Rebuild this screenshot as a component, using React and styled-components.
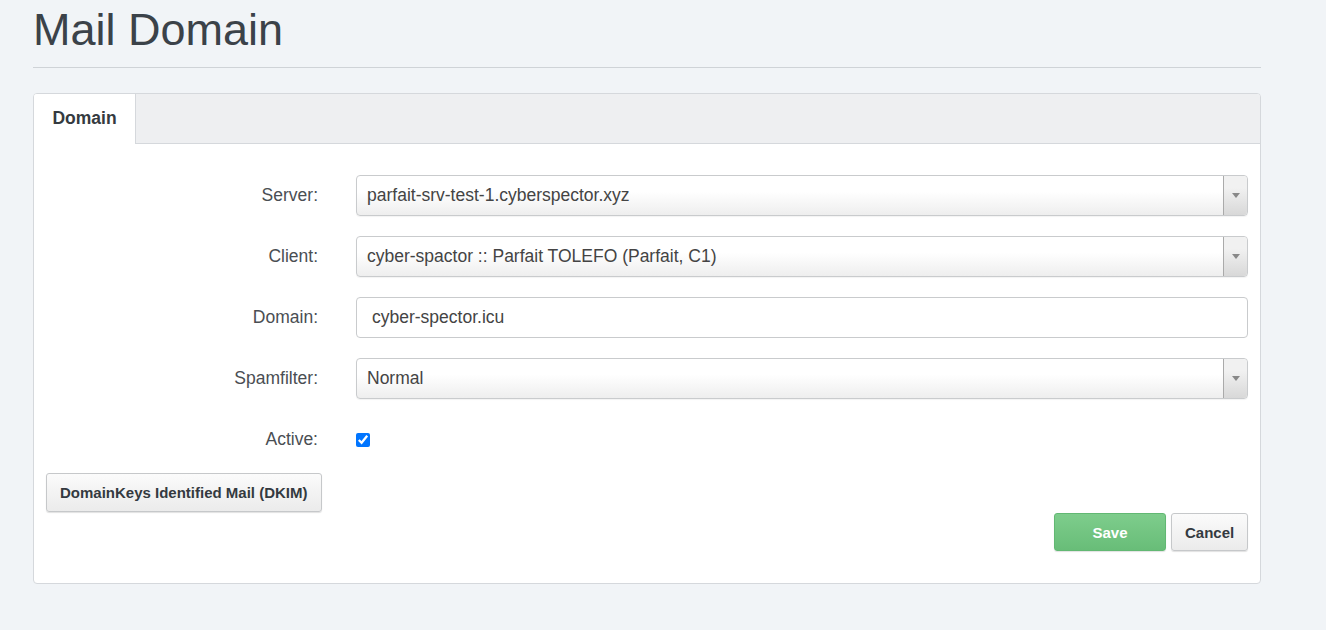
import React from "react";
import styled, { createGlobalStyle } from "styled-components";

const Global = createGlobalStyle`
  html, body { margin: 0; padding: 0; background: #f1f4f7; }
  body { font-family: "Liberation Sans", Arial, sans-serif; color: #444; }
  * { box-sizing: border-box; }
`;

const Page = styled.div`
  width: 1228px;
  margin-left: 33px;
  padding-bottom: 40px;
`;

const Header = styled.div`
  border-bottom: 1px solid #cfd3d7;
  padding-bottom: 13px;
`;

const Title = styled.h1`
  margin: 6px 0 0;
  font-size: 45px;
  line-height: 48px;
  font-weight: 400;
  color: #3b4249;
`;

const Panel = styled.div`
  margin-top: 25px;
  background: #fff;
  border: 1px solid #d5d8dc;
  border-radius: 4px;
  overflow: hidden;
`;

const TabBar = styled.div`
  display: flex;
  height: 50px;
  background: #eeeff1;
  border-bottom: 1px solid #d5d8dc;
`;

const Tab = styled.div`
  width: 102px;
  display: flex;
  align-items: center;
  justify-content: center;
  font-size: 17.5px;
  font-weight: 700;
  color: #343a40;
  background: ${(p) => (p.$active ? "#fff" : "transparent")};
  border-right: 1px solid #d5d8dc;
  margin-bottom: ${(p) => (p.$active ? "-1px" : "0")};
  padding-bottom: 1px;
`;

const Body = styled.div`
  padding: 31px 12px 32px 12px;
`;

const Form = styled.div`
  display: grid;
  grid-template-columns: 272px 1fr;
  column-gap: 38px;
  row-gap: 20px;
`;

const Label = styled.label`
  text-align: right;
  font-size: 17.5px;
  color: #4a4e53;
  height: 41px;
  line-height: 41px;
`;

const SelectBox = styled.div`
  position: relative;
  height: 41px;
  border: 1px solid #c9cbcd;
  border-radius: 4px;
  background: linear-gradient(#fff 40%, #eeeeee 100%);
  display: flex;
  align-items: center;
  padding-left: 10px;
  font-size: 17.5px;
  color: #444;
  box-shadow: 0 1px 1px rgba(0, 0, 0, 0.05);
`;

const Arrow = styled.div`
  position: absolute;
  right: 0;
  top: 0;
  bottom: 0;
  width: 24px;
  border-left: 1px solid #aaa;
  border-radius: 0 4px 4px 0;
  background: linear-gradient(#f1f1f1 30%, #d8d8d8 100%);
  display: flex;
  align-items: center;
  justify-content: center;
  &::after {
    content: "";
    border-left: 4px solid transparent;
    border-right: 4px solid transparent;
    border-top: 5px solid #888;
  }
`;

const Input = styled.input`
  height: 41px;
  border: 1px solid #c9cbcd;
  border-radius: 4px;
  padding: 0 15px;
  font-family: inherit;
  font-size: 17.5px;
  color: #444;
  width: 100%;
  outline: none;
`;

const CheckCell = styled.div`
  display: flex;
  align-items: center;
  height: 41px;
`;

const Check = styled.input`
  margin: 0;
  width: 14px;
  height: 14px;
  accent-color: #0075ff;
`;

const Button = styled.button`
  font-family: "Liberation Sans", Arial, sans-serif;
  font-weight: 700;
  font-size: 15px;
  height: ${(p) => p.$h || "39px"};
  padding: 0 13px;
  border-radius: 3px;
  cursor: pointer;
  border: 1px solid ${(p) => (p.$primary ? "#62b873" : "#c6c8ca")};
  color: ${(p) => (p.$primary ? "#fff" : "#343a40")};
  background: ${(p) =>
    p.$primary
      ? "linear-gradient(#7ecd8c, #68bd78)"
      : "linear-gradient(#fbfbfb, #ebebeb)"};
  box-shadow: 0 1px 1px rgba(0, 0, 0, 0.12);
  width: ${(p) => p.$w || "auto"};
`;

const DkimRow = styled.div`
  margin-top: 13px;
`;

const Actions = styled.div`
  display: flex;
  justify-content: flex-end;
  gap: 5px;
  margin-top: 1px;
`;

function Select({ value }) {
  return (
    <SelectBox>
      {value}
      <Arrow />
    </SelectBox>
  );
}

export default function App() {
  return (
    <>
      <Global />
      <Page>
        <Header>
          <Title>Mail Domain</Title>
        </Header>
        <Panel>
          <TabBar>
            <Tab $active>Domain</Tab>
          </TabBar>
          <Body>
            <Form>
              <Label>Server:</Label>
              <Select value="parfait-srv-test-1.cyberspector.xyz" />
              <Label>Client:</Label>
              <Select value="cyber-spactor :: Parfait TOLEFO (Parfait, C1)" />
              <Label>Domain:</Label>
              <Input defaultValue="cyber-spector.icu" />
              <Label>Spamfilter:</Label>
              <Select value="Normal" />
              <Label>Active:</Label>
              <CheckCell>
                <Check type="checkbox" defaultChecked />
              </CheckCell>
            </Form>
            <DkimRow>
              <Button>DomainKeys Identified Mail (DKIM)</Button>
            </DkimRow>
            <Actions>
              <Button $primary $w="112px" $h="38px">Save</Button>
              <Button $w="77px" $h="38px">Cancel</Button>
            </Actions>
          </Body>
        </Panel>
      </Page>
    </>
  );
}
